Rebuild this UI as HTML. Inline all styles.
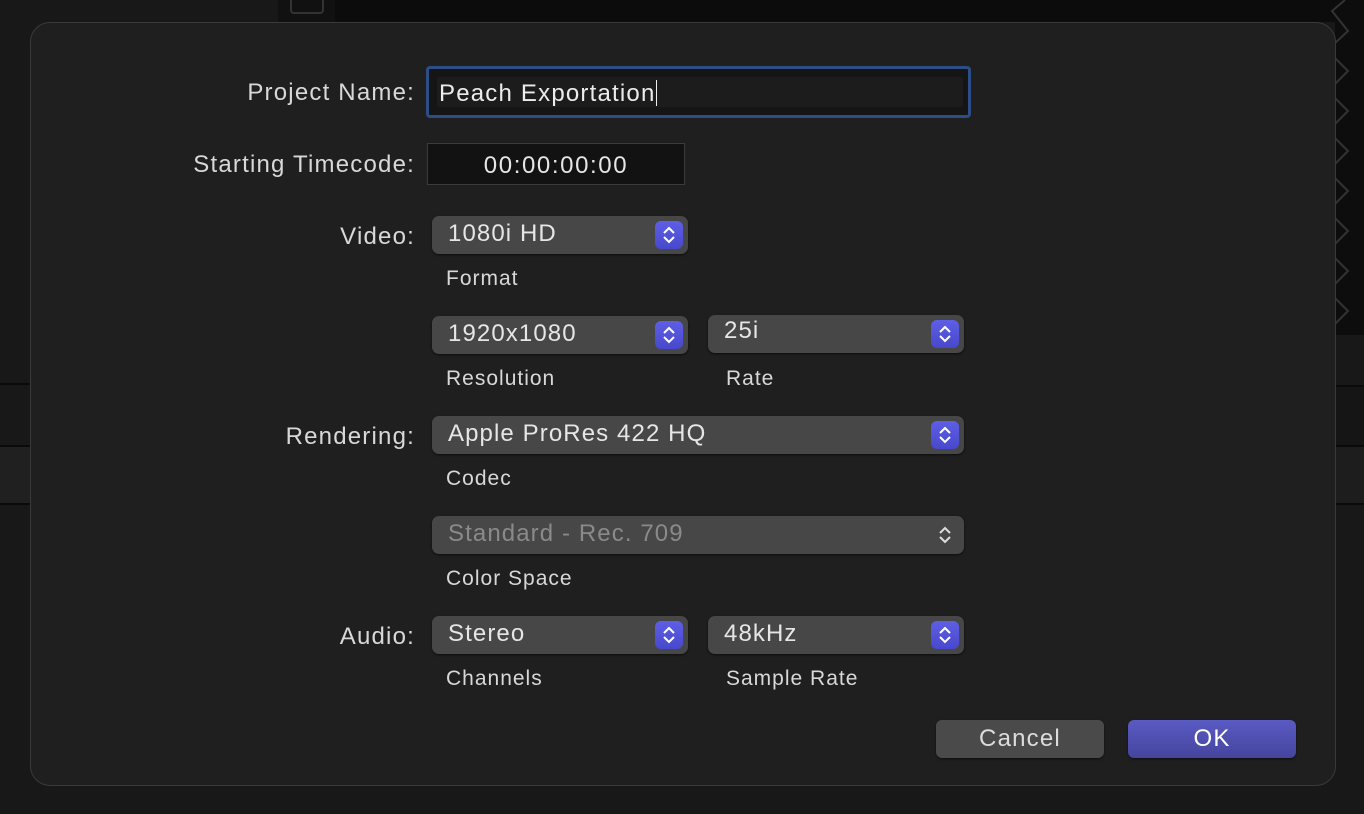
<!DOCTYPE html>
<html><head><meta charset="utf-8"><style>
*{box-sizing:border-box;margin:0;padding:0}
body{width:1364px;height:814px;overflow:hidden;background:#181818;font-family:"Liberation Sans",sans-serif;position:relative;color:#dcdcdc}
.a{position:absolute}
.lbl{position:absolute;right:949px;font-size:24px;letter-spacing:1.2px;color:#d8d8d8;white-space:nowrap}
.sub{position:absolute;font-size:21px;letter-spacing:1px;color:#d8d8d8;white-space:nowrap}
.pop{position:absolute;height:38px;background:#474747;border-radius:7px;box-shadow:0 1px 2px rgba(0,0,0,.6);font-size:24px;letter-spacing:1.1px;color:#e6e6e6;padding:4px 0 0 16px;white-space:nowrap}
.st{position:absolute;right:5px;top:5px;width:28px;height:28px;border-radius:6px;background:linear-gradient(#5f5fe6,#4848cc)}
.st svg{position:absolute;left:7px;top:5px}
</style></head><body>
<div class="a" style="left:335px;top:0;width:1029px;height:22px;background:#0c0c0c"></div>
<div class="a" style="left:278px;top:0;width:57px;height:22px;background:#111"></div>
<div class="a" style="left:290px;top:-4px;width:34px;height:18px;border:2px solid #333;border-radius:4px"></div>
<div class="a" style="left:1335px;top:0;width:29px;height:335px;background:#0d0d0d"></div>
<svg class="a" style="left:1320px;top:0" width="44" height="335"><g fill="none" stroke="#333" stroke-width="2">
<path d="M25 0 L12 11 L28 31 L14 44"/><path d="M15 58 L28 71 L15 84"/><path d="M15 98 L28 111 L15 124"/><path d="M15 138 L28 151 L15 164"/><path d="M15 178 L28 191 L15 204"/><path d="M15 218 L28 231 L15 244"/><path d="M15 258 L28 271 L15 284"/><path d="M15 298 L28 311 L15 324"/></g></svg>
<div class="a" style="left:0;top:383px;width:30px;height:2px;background:#0a0a0a"></div>
<div class="a" style="left:0;top:445px;width:30px;height:60px;background:#202020;border-top:2px solid #0a0a0a;border-bottom:2px solid #0a0a0a"></div>
<div class="a" style="left:1335px;top:385px;width:29px;height:60px;background:#151515;border-top:2px solid #0a0a0a"></div>
<div class="a" style="left:1335px;top:445px;width:29px;height:60px;background:#1d1d1d;border-top:2px solid #0a0a0a;border-bottom:2px solid #0a0a0a"></div>
<div class="a" style="left:30px;top:22px;width:1306px;height:764px;background:#1f1f1f;border:1px solid #3a3a3a;border-radius:20px"></div>

<div class="lbl" style="top:79px">Project Name:</div>
<div class="a" style="left:426px;top:66px;width:545px;height:52px;border:3px solid #2c4d85;border-radius:4px;background:#151515">
<div class="a" style="left:8px;top:8px;width:526px;height:30px;background:#1c1c1c"></div>
<div class="a" style="left:10px;top:11px;font-size:24px;letter-spacing:1.2px;color:#ececec;white-space:nowrap">Peach Exportation<span style="display:inline-block;width:1px;height:26px;background:#eee;vertical-align:-5px"></span></div></div>
<div class="lbl" style="top:151px">Starting Timecode:</div>
<div class="a" style="left:427px;top:143px;width:258px;height:42px;background:#121212;border:1px solid #3a3a3a;text-align:center;font-size:24px;letter-spacing:1.6px;padding-top:8px;color:#e6e6e6">00:00:00:00</div>

<div class="lbl" style="top:223px">Video:</div>
<div class="pop" style="left:432px;top:216px;width:256px">1080i HD<div class="st"><svg width="14" height="18"><path d="M2 7 L7 2 L12 7 M2 11 L7 16 L12 11" fill="none" stroke="#fff" stroke-width="2"/></svg></div></div>
<div class="sub" style="left:446px;top:267px">Format</div>
<div class="pop" style="left:432px;top:316px;width:256px">1920x1080<div class="st"><svg width="14" height="18"><path d="M2 7 L7 2 L12 7 M2 11 L7 16 L12 11" fill="none" stroke="#fff" stroke-width="2"/></svg></div></div>
<div class="pop" style="left:708px;top:315px;width:256px;padding-top:2px">25i<div class="st"><svg width="14" height="18"><path d="M2 7 L7 2 L12 7 M2 11 L7 16 L12 11" fill="none" stroke="#fff" stroke-width="2"/></svg></div></div>
<div class="sub" style="left:446px;top:367px">Resolution</div>
<div class="sub" style="left:726px;top:367px">Rate</div>

<div class="lbl" style="top:423px">Rendering:</div>
<div class="pop" style="left:432px;top:416px;width:532px">Apple ProRes 422 HQ<div class="st"><svg width="14" height="18"><path d="M2 7 L7 2 L12 7 M2 11 L7 16 L12 11" fill="none" stroke="#fff" stroke-width="2"/></svg></div></div>
<div class="sub" style="left:446px;top:467px">Codec</div>
<div class="pop" style="left:432px;top:516px;width:532px;color:#8a8a8a">Standard - Rec. 709<svg class="a" style="right:12px;top:10px" width="14" height="18"><path d="M2 7 L7 2 L12 7 M2 11 L7 16 L12 11" fill="none" stroke="#ddd" stroke-width="2"/></svg></div>
<div class="sub" style="left:446px;top:567px">Color Space</div>

<div class="lbl" style="top:623px">Audio:</div>
<div class="pop" style="left:432px;top:616px;width:256px">Stereo<div class="st"><svg width="14" height="18"><path d="M2 7 L7 2 L12 7 M2 11 L7 16 L12 11" fill="none" stroke="#fff" stroke-width="2"/></svg></div></div>
<div class="pop" style="left:708px;top:616px;width:256px">48kHz<div class="st"><svg width="14" height="18"><path d="M2 7 L7 2 L12 7 M2 11 L7 16 L12 11" fill="none" stroke="#fff" stroke-width="2"/></svg></div></div>
<div class="sub" style="left:446px;top:667px">Channels</div>
<div class="sub" style="left:726px;top:667px">Sample Rate</div>

<div class="a" style="left:936px;top:720px;width:168px;height:38px;background:#4a4a4a;border-radius:6px;box-shadow:0 1px 2px rgba(0,0,0,.6);text-align:center;font-size:24px;letter-spacing:1.2px;padding-top:5px;color:#dcdcdc">Cancel</div>
<div class="a" style="left:1128px;top:720px;width:168px;height:38px;background:linear-gradient(#5a5ac4,#45459e);border-radius:6px;box-shadow:0 1px 2px rgba(0,0,0,.6);text-align:center;font-size:24px;letter-spacing:1.2px;padding-top:5px;color:#fff">OK</div>
</body></html>
